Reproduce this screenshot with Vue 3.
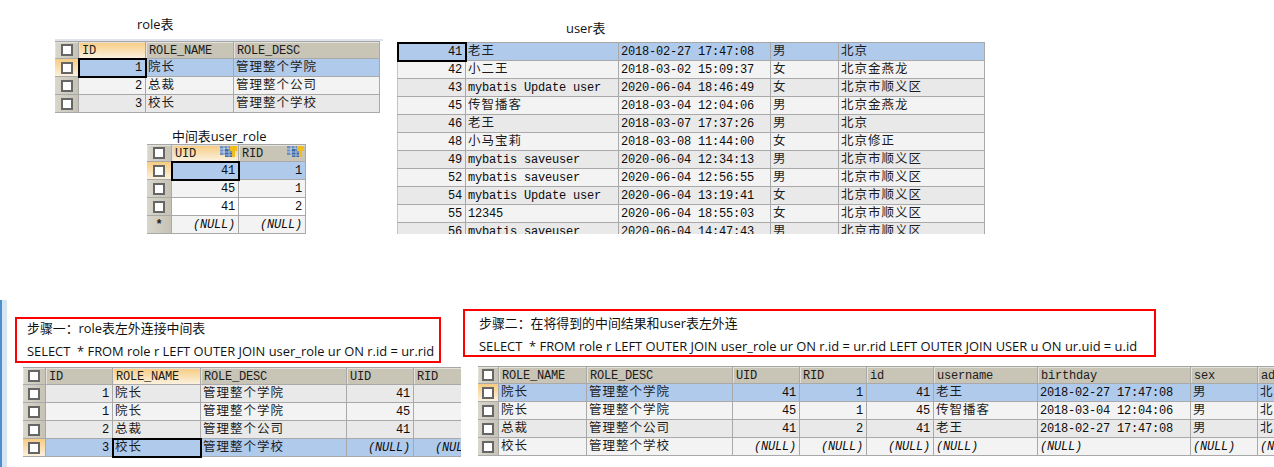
<script setup>
const sel = 'sel', a = 'alt', b = 'base', w = 'plain'
const N = '(NULL)'

const roleTable = {
  cols: [[24], [67, 'ID', true], [88, 'ROLE_NAME'], [146, 'ROLE_DESC']],
  align: ['r', 'l', 'l'],
  rows: [
    { tone: sel, active: true, focus: 0, cells: ['1', '院长', '管理整个学院'] },
    { tone: b, cells: ['2', '总裁', '管理整个公司'] },
    { tone: a, cells: ['3', '校长', '管理整个学校'] }
  ]
}

const linkTable = {
  icons: true,
  cols: [[25], [67, 'UID', true], [67, 'RID']],
  align: ['r', 'r'],
  rows: [
    { tone: sel, active: true, focus: 0, cells: ['41', '1'] },
    { tone: b, cells: ['45', '1'] },
    { tone: w, cells: ['41', '2'] },
    { tone: b, star: true, cells: [N, N] }
  ]
}

const userTable = {
  slim: true,
  noHead: true,
  cols: [[1], [68], [153], [152], [68], [146]],
  align: ['r', 'l', 'l', 'l', 'l'],
  rows: [
    ['41', '老王', '2018-02-27 17:47:08', '男', '北京', sel],
    ['42', '小二王', '2018-03-02 15:09:37', '女', '北京金燕龙', b],
    ['43', 'mybatis Update user', '2020-06-04 18:46:49', '女', '北京市顺义区', a],
    ['45', '传智播客', '2018-03-04 12:04:06', '男', '北京金燕龙', b],
    ['46', '老王', '2018-03-07 17:37:26', '男', '北京', a],
    ['48', '小马宝莉', '2018-03-08 11:44:00', '女', '北京修正', b],
    ['49', 'mybatis saveuser', '2020-06-04 12:34:13', '男', '北京市顺义区', a],
    ['52', 'mybatis saveuser', '2020-06-04 12:56:55', '男', '北京市顺义区', b],
    ['54', 'mybatis Update user', '2020-06-04 13:19:41', '女', '北京市顺义区', a],
    ['55', '12345', '2020-06-04 18:55:03', '女', '北京市顺义区', b],
    ['56', 'mybatis saveuser', '2020-06-04 14:47:43', '男', '北京市顺义区', a]
  ].map((r, i) => ({
    tone: r[5],
    active: i === 0,
    focus: i === 0 ? 0 : -1,
    cells: r.slice(0, 5)
  }))
}

const joinOne = {
  cols: [[23], [67, 'ID'], [88, 'ROLE_NAME', true], [146, 'ROLE_DESC'], [67, 'UID'], [67, 'RID']],
  align: ['r', 'l', 'l', 'r', 'r'],
  rows: [
    { tone: a, cells: ['1', '院长', '管理整个学院', '41', '1'] },
    { tone: b, cells: ['1', '院长', '管理整个学院', '45', '1'] },
    { tone: a, cells: ['2', '总裁', '管理整个公司', '41', '2'] },
    { tone: sel, active: true, focus: 1, cells: ['3', '校长', '管理整个学校', N, N] }
  ]
}

const joinTwo = {
  cols: [[21], [88, 'ROLE_NAME'], [146, 'ROLE_DESC'], [67, 'UID'], [67, 'RID'], [67, 'id'], [104, 'username'], [153, 'birthday'], [67, 'sex'], [67, 'address']],
  align: ['l', 'l', 'r', 'r', 'r', 'l', 'l', 'l', 'l'],
  rows: [
    { tone: sel, active: true, cells: ['院长', '管理整个学院', '41', '1', '41', '老王', '2018-02-27 17:47:08', '男', '北京'] },
    { tone: b, cells: ['院长', '管理整个学院', '45', '1', '45', '传智播客', '2018-03-04 12:04:06', '男', '北京金燕龙'] },
    { tone: a, cells: ['总裁', '管理整个公司', '41', '2', '41', '老王', '2018-02-27 17:47:08', '男', '北京'] },
    { tone: b, cells: ['校长', '管理整个学校', N, N, N, N, N, N, N] }
  ]
}

const columns = (t) => ({ gridTemplateColumns: t.cols.map((c) => c[0] + 'px').join(' ') })
const width = (t) => ({ width: t.cols.reduce((s, c) => s + c[0], 0) + 'px' })
const isCjk = (s) => /[^\x00-\x7f]/.test(s)
const tables = { roleTable, linkTable, userTable, joinOne, joinTwo }
</script>

<template>
  <div class="page">
    <section class="top">
      <div class="top-left">
        <p class="cap cap-role">role表</p>
        <div class="role-bar"></div>
        <div class="sheet with-head" :style="[columns(tables.roleTable), width(tables.roleTable)]">
          <template v-for="t in [tables.roleTable]" :key="'h'">
            <div class="head gutter"><i class="box"></i></div>
            <div v-for="c in t.cols.slice(1)" :key="c[1]" class="head" :class="{ hot: c[2] }">{{ c[1] }}</div>
            <template v-for="(r, ri) in t.rows" :key="ri">
              <div class="gutter" :class="{ hot: r.active }"><i class="box"></i></div>
              <div v-for="(v, ci) in r.cells" :key="ci" class="cell" :class="[r.tone, t.align[ci], { cjk: isCjk(v), nil: v === '(NULL)', focus: r.focus === ci }]">{{ v }}</div>
            </template>
          </template>
        </div>
        <p class="cap cap-link">中间表user_role</p>
        <div class="sheet with-head link" :style="[columns(tables.linkTable), width(tables.linkTable)]">
          <template v-for="t in [tables.linkTable]" :key="'h'">
            <div class="head gutter"><i class="box"></i></div>
            <div v-for="c in t.cols.slice(1)" :key="c[1]" class="head with-icon" :class="{ hot: c[2] }">
              <span>{{ c[1] }}</span>
              <svg class="key" viewBox="0 0 17 11" width="17" height="11">
                <rect x="0" y="0" width="11" height="9" fill="#6f8fbd" />
                <path d="M0 3h11M0 6h11M4 0v9M8 0v9" stroke="#d5e0ef" stroke-width="0.8" fill="none" />
                <rect x="5" y="3" width="8" height="8" fill="#3f6aa6" />
                <path d="M5 6h8M5 9h8M9 3v8" stroke="#b9cbe3" stroke-width="0.8" fill="none" />
                <path d="M10 0h7v5h-2v6h-3V5h-2z" fill="#f0bd1e" />
              </svg>
            </div>
            <template v-for="(r, ri) in t.rows" :key="ri">
              <div class="gutter" :class="{ hot: r.active }">
                <b v-if="r.star" class="star">*</b>
                <i v-else class="box"></i>
              </div>
              <div v-for="(v, ci) in r.cells" :key="ci" class="cell" :class="[r.tone, t.align[ci], { nil: v === '(NULL)', focus: r.focus === ci }]">{{ v }}</div>
            </template>
          </template>
        </div>
      </div>

      <div class="top-right">
        <p class="cap cap-user">user表</p>
        <div class="clip-user">
          <div class="sheet" :style="[columns(tables.userTable), width(tables.userTable)]">
            <template v-for="(r, ri) in tables.userTable.rows" :key="ri">
              <div class="edge-gutter" :class="{ hot: r.active }"></div>
              <div v-for="(v, ci) in r.cells" :key="ci" class="cell" :class="[r.tone, tables.userTable.align[ci], { cjk: isCjk(v), focus: r.focus === ci }]">{{ v }}</div>
            </template>
          </div>
        </div>
      </div>
    </section>

    <section class="bottom">
      <div class="window-edge"></div>
      <div class="step step-one">
        <div class="note note-one">
          <p>步骤一：role表左外连接中间表</p>
          <p class="sql">SELECT&nbsp; * FROM role r LEFT OUTER JOIN user_role ur ON r.id = ur.rid</p>
        </div>
        <div class="sheet with-head sheet-one" :style="[columns(tables.joinOne), width(tables.joinOne)]">
          <template v-for="t in [tables.joinOne]" :key="'h'">
            <div class="head gutter"><i class="box"></i></div>
            <div v-for="c in t.cols.slice(1)" :key="c[1]" class="head" :class="{ hot: c[2] }">{{ c[1] }}</div>
            <template v-for="(r, ri) in t.rows" :key="ri">
              <div class="gutter" :class="{ hot: r.active }"><i class="box"></i></div>
              <div v-for="(v, ci) in r.cells" :key="ci" class="cell" :class="[r.tone, t.align[ci], { cjk: isCjk(v), nil: v === '(NULL)', focus: r.focus === ci }]">{{ v }}</div>
            </template>
          </template>
        </div>
      </div>
      <div class="step step-two">
        <div class="note note-two">
          <p>步骤二：在将得到的中间结果和user表左外连</p>
          <p class="sql">SELECT&nbsp; * FROM role r LEFT OUTER JOIN user_role ur ON r.id = ur.rid LEFT OUTER JOIN USER u ON ur.uid = u.id</p>
        </div>
        <div class="sheet with-head sheet-two" :style="[columns(tables.joinTwo), width(tables.joinTwo)]">
          <template v-for="t in [tables.joinTwo]" :key="'h'">
            <div class="head gutter"><i class="box"></i></div>
            <div v-for="c in t.cols.slice(1)" :key="c[1]" class="head">{{ c[1] }}</div>
            <template v-for="(r, ri) in t.rows" :key="ri">
              <div class="gutter" :class="{ hot: r.active }"><i class="box"></i></div>
              <div v-for="(v, ci) in r.cells" :key="ci" class="cell" :class="[r.tone, t.align[ci], { cjk: isCjk(v), nil: v === '(NULL)' }]">{{ v }}</div>
            </template>
          </template>
        </div>
      </div>
    </section>
  </div>
</template>

<style scoped>
.page {
  width: 1274px;
  height: 467px;
  overflow: hidden;
  background: #fff;
  font-family: "Open Sans", "Noto Sans CJK SC", sans-serif;
  color: #111;
}
p { margin: 0; }

.top { display: flex; height: 300px; }
.top-left { width: 397px; padding-left: 55px; box-sizing: border-box; }
.top-right { width: 600px; }

.cap { font-size: 12.9px; line-height: 18px; white-space: nowrap; }
.cap-role { margin: 15px 0 0 82px; height: 24px; }
.cap-link { margin: 14px 0 0 117px; height: 17px; }
.cap-user { margin: 19px 0 0 169px; height: 23px; }
.role-bar { width: 328px; height: 2px; background: #dfe4ec; }

.sheet {
  display: grid;
  grid-auto-rows: 18px;
  font-family: "Liberation Mono", "Noto Sans CJK SC", monospace;
  font-size: 12px;
  letter-spacing: -0.2px;
  border-top: 1px solid #a6a6a6;
  box-sizing: content-box;
}
.with-head { grid-template-rows: 17px; }
.link { margin: 0 0 0 92px; }
.clip-user { height: 192px; overflow: hidden; }

.head, .cell, .gutter {
  box-sizing: border-box;
  border-right: 1px solid #a9a9a9;
  border-bottom: 1px solid #a9a9a9;
  line-height: 19px;
  padding: 0 3px;
  white-space: nowrap;
  overflow: hidden;
}
.head {
  background: #c8c4b6;
  box-shadow: inset 1px 1px 0 #e4e2da;
  color: #1c1c1c;
}
.head.hot { background: linear-gradient(#f7cb80, #fbf1de); }
.with-icon { display: flex; justify-content: space-between; padding-right: 1px; }
.key { margin-top: 1px; }

.gutter {
  display: flex;
  align-items: center;
  justify-content: center;
  padding: 0;
  background: linear-gradient(90deg, #d9d7cd, #c6c2b4);
}
.gutter.hot { background: linear-gradient(#f7cb80, #fbf1de); }
.box {
  display: block;
  width: 12px;
  height: 12px;
  box-sizing: border-box;
  border: 2px solid #666;
  background: #fff;
}
.star { font: 700 12px/16px "Liberation Mono", monospace; color: #222; }
.edge-gutter { background: #c8c4b6; border-bottom: 1px solid #a9a9a9; }
.edge-gutter.hot { background: #f7cb80; }

.cell { position: relative; padding: 0 3px 0 2px; color: #0c0c0c; }
.r { text-align: right; }
.l { text-align: left; }
.sel { background: #b0caec; }
.alt { background: #e9e9e9; }
.base { background: #f3f3f3; }
.plain { background: #fff; }
.cjk { font-size: 12.5px; letter-spacing: 1px; color: #1c1c1c; }
.nil { font-style: italic; }
.focus { outline: 2px solid #000; outline-offset: -1px; z-index: 1; overflow: visible; }

.bottom { display: flex; height: 167px; }
.window-edge {
  width: 7px;
  box-sizing: border-box;
  border-left: 2px solid #4c8fd0;
  background: #d7e4f2;
  margin-right: 8px;
}
.step { overflow: hidden; height: 167px; flex: none; }
.step-one { width: 446px; margin-right: 2px; padding-top: 17px; box-sizing: border-box; }
.step-two { width: 811px; padding-top: 9px; box-sizing: border-box; }
.note {
  box-sizing: border-box;
  border: 2px solid #f00;
  font-size: 12.9px;
  line-height: 17px;
  white-space: nowrap;
}
.note-one { width: 426px; height: 46px; padding: 1px 0 0 10px; }
.note-two { width: 693px; height: 48px; padding: 4px 0 0 14px; }
.sql { margin-top: 6px; }
.sheet-one { margin: 4px 0 0 8px; }
.sheet-two { margin: 9px 0 0 15px; }
</style>
